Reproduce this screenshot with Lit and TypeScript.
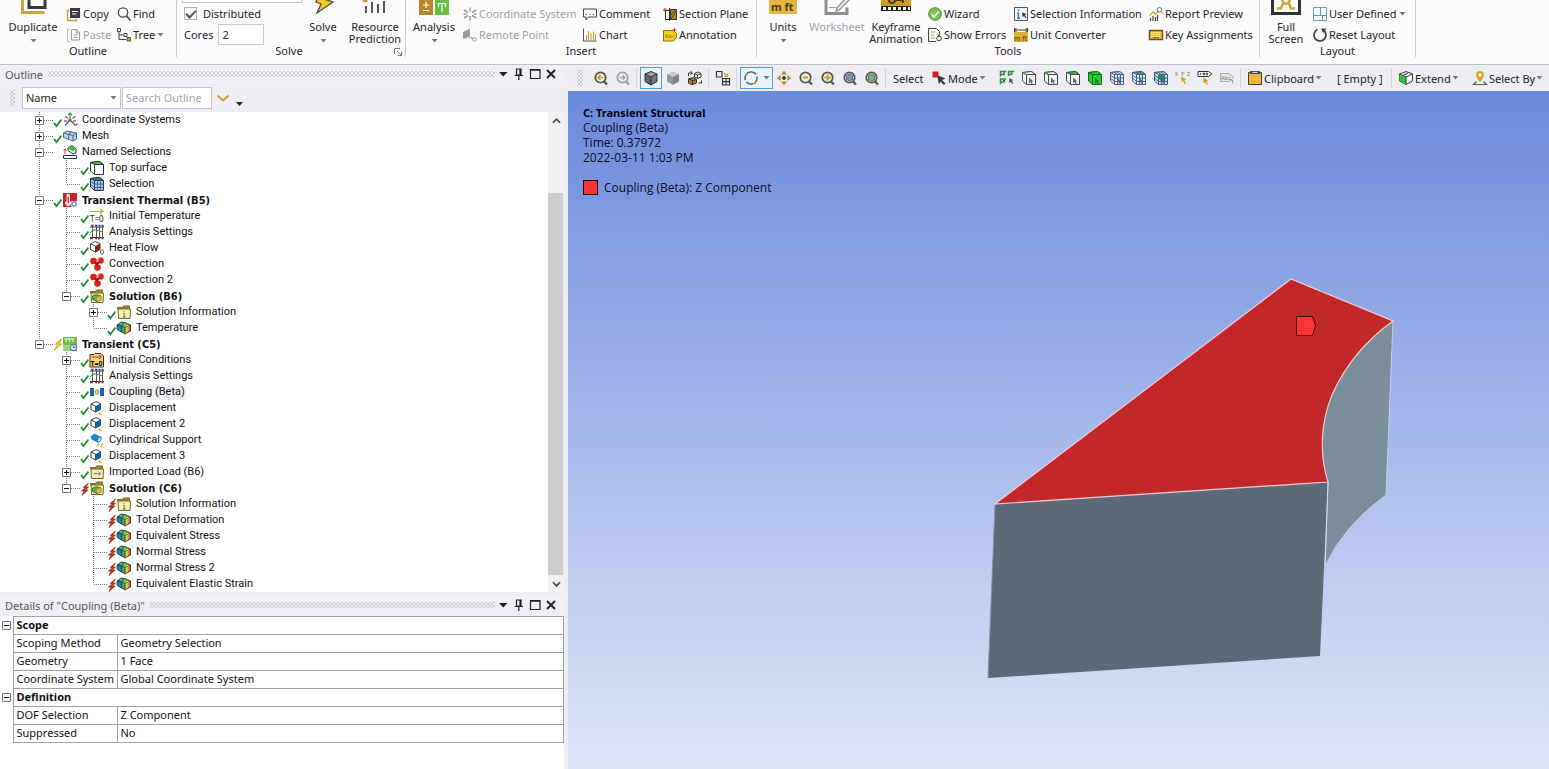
import { LitElement, html, svg, css, nothing, type TemplateResult } from "lit";
import { customElement, property, state } from "lit/decorators.js";
import { classMap } from "lit/directives/class-map.js";

type Art = TemplateResult;

/* ---------- shared icon fragments ---------- */

const lens = (rim: string, inner: Art) => svg`
  <path d="M11 11.500 14 14.500" stroke=${rim} stroke-width="2.400"/>
  <circle cx="7.500" cy="7.500" r="5.200" fill="#f4f2ee" stroke=${rim} stroke-width="1.800"/>${inner}`;

const cursor = svg`<path d="M8 7.500v6l1.500-1.400 1.200 2.200 1-.6-1.100-2.100h2z" fill="#666"/>`;

const box = (top: string, rest: string, line: string, extra: Art) => svg`
  <path d="M1.500 2.500 10.500 1.500l4 3v10H5.500l-4-3.500z" fill=${rest} stroke=${line}/>
  <path d="M1.500 2.500 10.500 1.500l4 3h-9z" fill=${top} stroke=${line}/>
  <path d="M5.500 4.500v10" stroke=${line}/>${extra}`;

const meshLines = svg`<path d="M8.500 4.500v10M11.500 4.500v10M5.500 8h9M5.500 11.500h9M2 5.500l3.500 2.500M2 8.500l3.500 3M5 2.200l3.500 2.300M8 2l3.500 2.500" stroke="#39679a"/>`;

const solid = (top: string, left: string, right: string, line: string) => svg`
  <path d="M8 1.500 14 4 8 7 2 4z" fill=${top}/><path d="M2 4l6 3v8l-6-3.500z" fill=${left}/><path d="M14 4 8 7v8l6-3.500z" fill=${right}/>
  <path d="M8 1.500 14 4v7.500L8 15l-6-3.500V4zM2 4l6 3 6-3M8 7v8" stroke=${line}/>`;

const folder = (inner: Art) => svg`
  <path d="M1.500 5V3.500h5l1-1.500h6v3" fill="#a08432" stroke="#7a6420"/>
  <path d="M2 5h12.500l-.5 9.500H2.500z" fill="#f6efb4" stroke="#7a6420"/>${inner}`;

const dispCube = svg`<path d="M2 4l5-2.500L11.500 3.500v6L6.500 12 2 9.500z" fill="#fff" stroke="#345"/>
  <path d="M6.500 6 11.500 3.500v6L6.500 12z" fill="#1763a8"/><path d="M2 4l4.500 2M6.500 6v6" stroke="#345"/>
  <path d="M14.500 10.500 10 14.500M10 12v2.500h3" stroke="#cfae5c"/>`;

const resultCube = svg`
  <path d="M1 5l4-3 4 1-1 7-3 2-4-3z" fill="#1f86b8"/><path d="M3 3.500 8 2l6 2-6 3z" fill="#6dc04a"/>
  <path d="M5.500 6 9 7.500v6.500L5.500 12z" fill="#3fae56"/><path d="M9 7.500 14.500 5v6L9 14z" fill="#f0c62e"/>
  <path d="M12.500 6 14.500 5v6l-2 1z" fill="#e0552b"/>
  <path d="M1 5l4-3 3 .3L14.500 5v6L9 14l-3.500-2L1 9.500zM5.500 6 9 7.500 14.500 5M9 7.500V14M5.500 6V12M5.500 6 8 2.500M1 5l4.500 1" stroke="#234" stroke-width=".8"/>`;

const settings = svg`<path d="M1 3h14M1 13.500h14" stroke="#333"/><path d="M3.500 2v12M7.500 2v12M10.500 2v12M13.500 2v12" stroke="#555"/>
  <path d="M1 9q3-4 6-3t7 2" stroke="#35a04a" stroke-width="1.200"/><path d="M2 1.500h2.500M6 1.500h2.500M9.500 1.500h2M12.500 1.500h2" stroke="#2a3aa0" stroke-width="1.500"/>
  <path d="M1 14.500h3M6 14.500h2M9 14.500h2M12.500 14.500h2" stroke="#a02a2a" stroke-width="1.500"/>`;

const fan = svg`<circle cx="4.500" cy="5" r="3.300" fill="#e01f1f"/><circle cx="11.500" cy="4.500" r="3.300" fill="#e01f1f"/><circle cx="8.500" cy="11.500" r="3.300" fill="#e01f1f"/>
  <circle cx="8" cy="7.500" r="2" fill="#a80f0f"/><path d="M5 8.500 3 11.500M10.500 1.500 8 6M12.500 8.500 9.500 8.500" stroke="#fff" stroke-width=".9"/>`;

const ICONS: Record<string, Art> = {
  /* ribbon, small */
  copy: svg`<path d="M3.500 4.500H1.500v10h9v-2" stroke="#c2a13c" stroke-width="1.300"/><path d="M4 2h10v10H4z" fill="#3a3a3e"/><path d="M6 5.500h6M6 8h4.500" stroke="#fff" stroke-width="1.200"/>`,
  paste: svg`<path d="M3.500 2.500H1.500v12h3" stroke="#bbb"/><path d="M5.500 2.500h5l3 3v7.500h-8zM10 2.500v3.500h3.500M7.500 8h4M7.500 10.500h4" stroke="#9a9a9e"/>`,
  find: svg`<circle cx="7" cy="6.500" r="4.700" stroke="#4a4a4e" stroke-width="1.300"/><path d="M10.500 10 14.500 14.500" stroke="#4a4a4e" stroke-width="1.800"/>`,
  tree: svg`<path d="M1.500 1.500h3v3h-3zM8 6.500h3v3H8z" stroke="#444"/><path d="M3 5v7.500h7M3 8h5" stroke="#444"/><path d="M11 10.500h3.500v3.500H11z" fill="#c2a13c" stroke="#6b5716"/>`,
  coords: svg`<path d="M8 1.500v4M8 10v4.500M2 4l4 2.500M14 4l-4 2.500M2 12l4-2.500M14 12l-4-2.500M1.500 8h3M12 8h2.500" stroke="#9c9c9c" stroke-width="1.500"/>`,
  remote: svg`<path d="M1 5 8 1.500v7L4.500 11.500H1z" fill="#9c9c9c"/><path d="M6 9l5 3" stroke="#9c9c9c" stroke-width="1.300"/><circle cx="12.500" cy="12.500" r="1.800" stroke="#9c9c9c"/>`,
  comment: svg`<path d="M1.500 3h13v8H6.500l-2.500 3v-3H1.500z" stroke="#444"/><path d="M4 8.500h1M7.500 8.500h1M11 8.500h1" stroke="#444"/>`,
  chart: svg`<path d="M1.500 1.500v12.500h13" stroke="#555"/><path d="M4.500 8v5M6.500 4v9M9 6v7M11.500 4.500V13M13.500 7v6" stroke="#c79b1e"/>`,
  section: svg`<path d="M3.500 4.500h11v9h-11z" stroke="#333"/><path d="M8.500 3.500h6v10h-6z" fill="#b0851f" stroke="#333"/><path d="M9 13 14 5.500M9 9l4-5" stroke="#5b430c"/><path d="M7.500 2v13" stroke="#333"/><path d="M1 4h4.500M3 2v4" stroke="#d22"/>`,
  annotation: svg`<path d="M1.500 3.500h10l3 3v4l-3 3.500h-10z" fill="#f3d21c" stroke="#8a6f10"/><text x="2.500" y="11" font-size="6" font-family="Noto Sans" fill="#8a6f10">Abc</text><path d="M10.500 3h4M12.500 1v4" stroke="#d22"/>`,
  wizard: svg`<circle cx="8" cy="8" r="6.300" fill="#7cc653" stroke="#4c8a2f"/><path d="M4.500 8l2.500 2.700 4.500-5" stroke="#fff" stroke-width="1.700"/>`,
  errors: svg`<path d="M9 14.500H1.500v-13h8l3 3v2" stroke="#444"/><path d="M4 5h4M4 8h3M4 11h4" stroke="#c79b1e"/><path d="M10.500 7.500l3 2M13.500 7l-3 2.500" stroke="#444"/><circle cx="12" cy="11.500" r="2.300" stroke="#444"/>`,
  selinfo: svg`<path d="M1.500 1.500h13v13h-13z" fill="#f4f8fb" stroke="#555"/><path d="M5.500 3.500v1.500M5.500 6.500v6M4 7h1.500M4 12.200h3" stroke="#2d7fb5" stroke-width="1.600"/><path d="M9 6.500l4.500 1.500-1.700 1 1.700 2.200-1 .8-1.500-2-1.300 1.300z" fill="#333"/>`,
  converter: svg`<rect x="1" y="5" width="14" height="10" fill="#dcae35"/><path d="M1.500 3h13M3.500 1 1.500 3l2 2M12.500 1l2 2-2 2M1.500 1v4M14.500 1v4" stroke="#4a3a12"/><text x="1" y="13.500" font-size="7" font-family="Noto Sans" fill="#4a3a12">m ft</text>`,
  report: svg`<path d="M2.500 15v-3M5 15v-5M7.500 15v-4M9.500 15V9" stroke="#444" stroke-width="1.200"/><path d="M1.500 9.500 5 6l2.500 2L11 5" stroke="#c79b1e" stroke-width="1.200"/><circle cx="11.500" cy="3.800" r="2.300" stroke="#777"/><path d="M13 5.500l1.800 2" stroke="#777"/>`,
  keys: svg`<path d="M1.500 3.500h13v9h-13z" fill="#efc02f" stroke="#6b5110" stroke-width="1.400"/><path d="M3 5.500h10M3 7.500h10M3 9.500h10" stroke="#fff0b0" stroke-dasharray="1.500 1"/><path d="M5 10.800h6" stroke="#6b5110"/>`,
  layout: svg`<path d="M1.500 1.500h13v13h-13zM8.500 1.500v8M1.500 9.500h13M10.500 9.500v5" stroke="#5b9aba"/>`,
  reset: svg`<path d="M5.500 2.500a6 6 0 1 0 6.500 1" stroke="#444" stroke-width="1.800"/><path d="M9 1.500h5.500L11 6z" fill="#444"/>`,

  /* toolbar */
  back: lens("#5a5550", svg`<path d="M10.500 7.500H5M7.500 5 5 7.500 7.500 10" stroke="#c79b1e" stroke-width="1.500"/>`),
  forward: lens("#a0a0a4", svg`<path d="M4.500 7.500H10M7.500 5l2.500 2.500L7.500 10" stroke="#a0a0a4" stroke-width="1.300"/>`),
  shaded: solid("#9aa0a0", "#5f6464", "#74797a", "#2e3030"),
  plain: solid("#c4c6c8", "#96999c", "#7e8184", "transparent"),
  swap: svg`<path d="M1.500 9 6 7.500l3.500 2V13L5 14.800 1.500 13z" fill="#a88320" stroke="#333"/><path d="M1.500 9 5.500 10.500l4-1M5.500 10.500v4" stroke="#333"/><path d="M7.500 3.500 11 2l3 1.500V7l-3 1.500-3.500-1.500zM7.500 3.500 10.500 5l3.500-1.500M10.500 5v3" stroke="#333"/><path d="M1.500 6V3h3.500M3.500 1 5.500 3 3.500 5M14.500 10.500v2.500H11.500" stroke="#333"/>`,
  views: svg`<path d="M1.500 1.500h5.500V7H1.500zM7.500 8.500h7v6.500h-7zM11 8.500V15M7.500 11.700h7" stroke="#333" stroke-width="1.200"/><path d="M9 3l3 3M12.500 3.500V6.500H9.500" stroke="#c79b1e" stroke-width="1.200"/>`,
  rotate: svg`<path d="M3.500 4A6 6 0 0 1 13 4.500M13.800 6.500A6 6 0 0 1 12 12.500M10.500 13.500A6 6 0 0 1 3.500 12M2.300 10A6 6 0 0 1 3 5" stroke="#555" stroke-width="1.400"/><path d="M3 4h2M11 13h2" stroke="#c79b1e" stroke-width="2"/>`,
  pan: svg`<path d="M8 .800 11 4.500H5zM8 15.200 5 11.500h6zM.800 8 4.500 5v6zM15.200 8 11.500 5v6z" fill="#b58a1c"/><path d="M7 6h2v1h1v2H9v1H7V9H6V7h1z" fill="#444"/>`,
  zoomout: lens("#5a5550", svg`<path d="M5 7.500h5" stroke="#c79b1e" stroke-width="2"/>`),
  zoomin: lens("#5a5550", svg`<path d="M4.500 7.500h6M7.500 4.500v6" stroke="#c79b1e" stroke-width="2"/>`),
  fit: lens("#5a5550", svg`<path d="M7.500 4l3 1.500v4l-3 1.500-3-1.500v-4z" fill="#7f97b5" stroke="#3f5878" stroke-width=".8"/>`),
  fitsel: lens("#5a5550", svg`<path d="M7.500 4l3 1.500v4l-3 1.500-3-1.500v-4z" fill="#7cab86" stroke="#2f6b3d" stroke-width=".8"/>`),
  mode: svg`<path d="M1.500 1.500h6v6h-6z" fill="#cf2020"/><path d="M6 5l8.500 3.500L11 10l3.500 3.500-1.500 1.500L9.500 11.500 8 14.500z" fill="#3c3c3c"/>`,
  filter: svg`<path d="M1.500 6.500V1.500H7M9.500 6V1.500H15M1.500 14.500V9H7M1.500 4.500H6M9.500 4.500h4M1.500 12H6" stroke="#2d8d3c" stroke-width="1.500"/><path d="M4 3h2M11.500 3h2M4 10.500h2" stroke="#333"/><path d="M10 8l4.500 2-1.700 1 1.700 2.300-1 .7-1.700-2-1.300 1.300z" fill="#555"/>`,
  vertex: box("#f2f2f4", "#f2f2f4", "#4a4a4e", svg`${cursor}<path d="M1 2h3v3z" fill="#2aa63a"/>`),
  edge: box("#f2f2f4", "#f2f2f4", "#4a4a4e", svg`${cursor}<path d="M1.500 2.500 5.500 4.500" stroke="#2aa63a" stroke-width="1.800"/>`),
  face: box("#2bc53a", "#f2f2f4", "#4a4a4e", cursor),
  body: box("#22d832", "#1fcf2f", "#17662a", svg`<path d="M8 7.500v6l1.500-1.400 1.200 2.200 1-.6-1.100-2.100h2z" fill="#117a1c"/>`),
  node: box("#e7eef6", "#e7eef6", "#44607e", svg`${meshLines}${cursor}`),
  eface: box("#4cb05c", "#e7eef6", "#44607e", svg`${meshLines}${cursor}`),
  element: box("#c9d8e8", "#c9d8e8", "#44607e", svg`<path d="M5 4h7v7H8L5 8z" fill="#2b9a44"/>${meshLines}${cursor}`),
  xyz: svg`<text x="0" y="5.500" font-size="5" font-family="Noto Sans" fill="#666">X</text><text x="6" y="5.500" font-size="5" font-family="Noto Sans" fill="#666">Y</text><text x="12" y="5.500" font-size="5" font-family="Noto Sans" fill="#666">Z</text><path d="M6 6.500l5.500 3-2 .7 1.500 3.500-1.300.6-1.500-3.300-1.500 1.300z" fill="#cfa12a"/>`,
  probe: svg`<path d="M1 1.500h10.500L15 4l-3.500 2.500H1z" fill="#fff" stroke="#333"/><path d="M3.500 3v2M6 3h1.500v2H6zM9 3h1.500v2H9z" stroke="#333" stroke-width=".8"/><path d="M6 7.500l5.500 3-2 .7 1.500 3-1.300.6-1.500-2.800-1.500 1.300z" fill="#cfa12a"/>`,
  label: svg`<path d="M1.500 3.500h9l4 4-4 4h-9z" fill="#e4e4e6" stroke="#aaa"/><text x="2" y="10" font-size="5.500" font-family="Noto Sans" fill="#777">Abc</text><path d="M10 9l4.500 2-1.500 1 1.500 2" stroke="#999"/>`,
  clipboard: svg`<path d="M1.500 2.500h13v12h-13z" fill="#e8b63c" stroke="#4a3c18"/><path d="M3 1h10v3H3z" fill="#4a4a4a"/><path d="M5.500 2.500h5" stroke="#ccc"/>`,
  extend: svg`<path d="M8 1.500 14.500 4v7L8 14.500 1.500 11V4z" fill="#f8f8f8" stroke="#3a3a3a"/><path d="M1.500 5 8 7.500v7L1.500 11z" fill="#24c434"/><path d="M1.500 4 8 7l6.500-3M8 7v7.500M4.500 5.500 11 2.500" stroke="#3a3a3a"/>`,
  selectby: svg`<path d="M8 1a4 4 0 0 1 4 4c0 3-4 7-4 7S4 8 4 5a4 4 0 0 1 4-4z" fill="#dca531"/><circle cx="8" cy="5" r="1.500" fill="#fff"/><path d="M4.500 11.500 1.500 14.500h13l-3-3" stroke="#555" stroke-width="1.200"/>`,

  /* tree */
  tCoords: svg`<path d="M8 8V1.500M6 3l2-2 2 2" stroke="#27a13a" stroke-width="1.200"/><path d="M8 8l5.500 5M8 8 3 13.500" stroke="#2f63b5" stroke-width="1.300"/><path d="M3 4l3 2.500M13.500 4 10.500 6.500M2 9h3M11 9h3" stroke="#777" stroke-width="1.300"/><circle cx="8" cy="8" r="1.600" fill="#d03030"/><path d="M12 13h3v-2" stroke="#d03030"/>`,
  tMesh: svg`<path d="M1.500 5 5 3l9.500 2v6L11 13 1.500 9.500z" fill="#bcd0e6" stroke="#4a6684"/><path d="M1.500 5 11 7.500 14.500 5M11 7.500V13M9 4 6.500 6.500v5" stroke="#4a6684"/>`,
  tNamed: svg`<path d="M6 4l4-2.500L14 5v4l-3 1-5-3.500z" fill="#e9f5ea" stroke="#333"/><path d="M6 4l4-2.500L14 5l-3.500 2.500z" fill="#3cba4b"/><path d="M3 10V5M1.500 6.500 3 5l1.500 1.500" stroke="#c33"/><path d="M1.500 11.500h13v3h-13z" fill="#fff" stroke="#333"/>`,
  tFace: box("#4cc05a", "#fff", "#333", svg``),
  tSel: box("#3c9b4b", "#b7c9e4", "#26344a", meshLines),
  tThermal: svg`<rect x="1" y="1" width="14" height="14" fill="#c9202a"/><path d="M5 2.500h2.500V9a2.500 2.500 0 1 1-2.500 0z" fill="#f6d8d8" stroke="#fff" stroke-width=".8"/><path d="M6.200 5v6" stroke="#c9202a" stroke-width="1.200"/><rect x="9" y="9" width="6" height="6" fill="#b6c3e6"/><circle cx="12" cy="12" r="2" fill="#fff" stroke="#5f79b8"/>`,
  tInit: svg`<path d="M1 3.500h12M11 1l3 2.500L11 6" stroke="#c9a13a" stroke-width="1.200"/><text x="1" y="14" font-size="8" font-family="Noto Sans" fill="#222">T=0</text>`,
  tSettings: settings,
  tHeat: svg`<path d="M1.500 4 6 1.500 11 3.500v6L6.500 12 1.500 9.500z" fill="#fff" stroke="#444"/><path d="M6.500 6 11 3.500v6L6.500 12z" fill="#8e1c1c"/><path d="M1.500 4l5 2v6" stroke="#444"/><ellipse cx="13" cy="12" rx="1.500" ry="2.300" stroke="#666"/>`,
  tFan: fan,
  tSolution: folder(svg`<path d="M3.500 8l4-1.500L12 8v4l-4 1.500-4.500-2z" fill="#5db04a" stroke="#2c5a34" stroke-width=".8"/><path d="M8 9.500 12 8v4l-4 1.500z" fill="#e8b92d"/>`),
  tInfo: folder(svg`<path d="M8 7v1.300M7 9.500h1.200V13M6.800 13h3" stroke="#4c8a4c"/>`),
  tResult: resultCube,
  tTransient: svg`<rect x="1" y="1" width="14" height="14" fill="#74bf4b"/><path d="M2.500 3h10M4 3v3M7.500 3v3M11 3v3" stroke="#e9f7df"/><rect x="1" y="9" width="8" height="6" fill="#9bd27b"/><circle cx="11.500" cy="11.500" r="3.300" fill="#cfe0f3" stroke="#3d72ad"/><path d="M11.500 9.500v2h2" stroke="#3d72ad"/>`,
  tInitFold: svg`<path d="M1 4V2.500h4L6 1.500h6L14.500 4v11H1z" fill="#f4d57e" stroke="#3c2e10"/><path d="M3 5h9M10 3l2.500 2L10 7" stroke="#c4302a"/><text x="1.500" y="14" font-size="7" font-weight="700" font-family="Noto Sans" fill="#111">T=0</text>`,
  tCoupling: svg`<path d="M1 4h4v8H1zM11 4h4v8h-4z" fill="#1c669e"/><path d="M6 5h4v6H6z" fill="#d9eadf"/><circle cx="8" cy="8" r="2" fill="#e4d48d" stroke="#8c9a60" stroke-width=".8"/>`,
  tDisp: dispCube,
  tCyl: svg`<path d="M1.500 4.500 5.500 1.500 12 5l-3.500 5.500-6-3z" fill="#2487d6"/><ellipse cx="10.300" cy="7.500" rx="1.500" ry="3" transform="rotate(30 10.300 7.500)" fill="#dcecf8" stroke="#1a5f99" stroke-width=".8"/><path d="M10 11.500l-2.500 3M14 11.500l-2.500 3" stroke="#cfae5c" stroke-width="1.300"/>`,
  tImport: folder(svg`<path d="M4.500 9.700h7M9.500 8l2 1.700-2 1.700" stroke="#4a7ba6"/>`),

  /* title bar */
  menu: svg`<path d="M4 6h8.500L8.200 10.500z" fill="#1e1e1e"/>`,
  pin: svg`<path d="M5.500 3h4.500v6H5.500zM9 3v6M3.500 9.500h8.500M7.800 10v4" stroke="#1e1e1e" stroke-width="1.200"/>`,
  max: svg`<path d="M3.500 3.500h9.500v9H3.500z" stroke="#1e1e1e" stroke-width="1.200"/><path d="M3.500 4h9.500" stroke="#1e1e1e" stroke-width="1.500"/>`,
  close: svg`<path d="M4 4l8 8M12 4l-8 8" stroke="#1e1e1e" stroke-width="1.800"/>`,
  chevGold: svg`<path d="M2.500 5.500 8 10.500l5.500-5" stroke="#c9a13a" stroke-width="1.800"/>`,
};

const BIG: Record<string, Art> = {
  duplicate: svg`<path d="M12 0v24.500h16V0" fill="none" stroke="#3a3a3e" stroke-width="3"/><path d="M5.500 14v15.500h22" stroke="#c9a43a" stroke-width="3"/>`,
  solve: svg`<path d="M16 4 28 12 20 17l6 2L10 30l4-9-5-2z" fill="#f3c920" stroke="#4a4a4a" stroke-width="1.300"/>`,
  resource: svg`<circle cx="6" cy="17" r="2.500" fill="#c9a43a"/><path d="M7 23v7M13 19v11M19 21v9M25 18v12" stroke="#55555a" stroke-width="2"/>`,
  analysis: svg`<rect x="1" y="17" width="14" height="15" fill="#b5872a"/><rect x="17" y="17" width="14" height="15" fill="#67c043"/><path d="M8 19v6M5 22h6M5 27.500h6M20 20.500h8M24 20v9M20.500 20v4M27.500 20v4" stroke="#fff" stroke-width="1.200"/>`,
  units: svg`<rect x="2" y="4" width="28" height="27" fill="#e3b741"/><text x="4" y="28" font-size="11" font-weight="700" font-family="Noto Sans" fill="#4a3a12">m ft</text>`,
  worksheet: svg`<path d="M5 10v20.500h21v-6" fill="none" stroke="#8e8e92" stroke-width="3"/><path d="M29 16 18 27l-3 1 1-3 10-11" stroke="#9a9a9e" stroke-width="1.500"/><path d="M8 24.500h7" stroke="#9a9a9e"/>`,
  keyframe: svg`<rect x="1" y="4" width="30" height="20" fill="#cf9c23"/><circle cx="12" cy="17" r="3" stroke="#4a3a12" stroke-width="2"/><path d="M15 17h8v3" stroke="#4a3a12" stroke-width="2"/><rect x="1" y="23" width="30" height="5" fill="#222"/><path d="M3 25.500h27" stroke="#fff" stroke-width="3" stroke-dasharray="3 2"/>`,
  fullscreen: svg`<path d="M2.500 6v24.500h27V6" stroke="#333" stroke-width="3"/><path d="M7 25.500h4l2-5h6l2 5h4M11 15l2.500 5M21 15l-2.500 5" stroke="#c9a43a" stroke-width="2.500"/>`,
};

const icon = (name: string) => html`<svg class="ic" viewBox="0 0 16 16" width="16" height="16" fill="none" aria-hidden="true">${ICONS[name]}</svg>`;
const bigIcon = (name: string) => html`<svg class="ic" viewBox="0 0 32 32" width="32" height="32" fill="none" aria-hidden="true">${BIG[name]}</svg>`;
const caret = html`<svg class="caret" viewBox="0 0 7 4" width="7" height="4" aria-hidden="true"><path d="M.500 0h6L3.500 3.500z" fill="#77777b"/></svg>`;

const base = css`
  * { box-sizing: border-box; }
  button, input, select { font: inherit; color: inherit; margin: 0; padding: 0; border-radius: 0; }
  button { background: none; border: 0; display: flex; align-items: center; white-space: nowrap; }
  .ic, .caret { display: block; flex: none; }
  .dots {
    background-image: radial-gradient(circle, #a9a9b1 0 1px, transparent 1px), radial-gradient(circle, #a9a9b1 0 1px, transparent 1px);
    background-size: 4px 4px;
    background-position: 0 0, 2px 2px;
    opacity: 0.5;
  }
`;

/* ---------- ribbon ---------- */

@customElement("ribbon-bar")
class RibbonBar extends LitElement {
  @state() private distributed = true;

  static styles = [base, css`
    :host { display: flex; align-items: flex-end; height: 65px; padding-bottom: 7px; overflow: hidden;
      background: #fafafb; border-bottom: 1px solid #bdbdc6; color: #262626; line-height: 12px; }
    .group { border-right: 1px solid #c9c9cf; flex: none; }
    .solving { padding-right: 4px; }
    .body { display: flex; align-items: flex-end; height: 63px; }
    .name { display: flex; justify-content: center; position: relative; }
    .launch { position: absolute; right: -1px; top: 3px; }
    .big { flex-direction: column; height: 62px; flex: none; text-align: center; }
    .big .ic { margin-bottom: 6px; }
    .big .text { display: block; white-space: pre-line; }
    .big .caret { margin-top: 6px; }
    .col { display: flex; flex-direction: column; flex: none; }
    .row { display: flex; align-items: center; height: 21px; gap: 1px; }
    .row .caret { margin-left: 1px; }
    .off { color: #a2a2a6; }
    .xs { width: 52px; } .s { width: 56px; } .m { width: 62px; } .l { width: 66px; }
    .c0 { width: 50px; } .c1 { width: 60px; } .c2 { width: 80px; } .c3 { width: 86px; } .c4 { width: 94px; }
    .c5 { width: 103px; } .c6 { width: 111px; } .c7 { width: 120px; } .c8 { width: 135px; }
    .solver { width: 120px; height: 21px; border: 1px solid #c4c4ca; background: #fff; }
    .opts { padding: 0 0 0 5px; }
    .opts .row { padding-left: 2px; gap: 5px; }
    .cores { width: 46px; height: 21px; border: 1px solid #c9c9d2; background: #fff; padding-left: 3px; outline: 0; }
    .tick { appearance: none; width: 13px; height: 13px; border: 1px solid #b4b4ba; background: #fff; display: grid; place-items: center; margin-right: 1px; }
    .tick:checked::before { content: ""; width: 4px; height: 8px; margin-bottom: 2px; border: solid #555; border-width: 0 2px 2px 0; transform: rotate(45deg); }
  `];

  private big(ic: string, text: string, width: string, menu = false, off = false) {
    return html`<button class="big ${width} ${off ? "off" : ""}" ?disabled=${off}>${bigIcon(ic)}<span class="text">${text}</span>${menu ? caret : nothing}</button>`;
  }

  private col(width: string, rows: [string, string, string?][]) {
    return html`<div class="col ${width}">${rows.map(([ic, text, flag]) => html`
      <button class="row ${flag === "off" ? "off" : ""}" ?disabled=${flag === "off"}>${icon(ic)}<span>${text}</span>${flag === "menu" ? caret : nothing}</button>`)}</div>`;
  }

  render() {
    return html`
      <div class="group"><div class="body">
        ${this.big("duplicate", "Duplicate", "l", true)}
        ${this.col("c0", [["copy", "Copy"], ["paste", "Paste", "off"]])}
        ${this.col("c1", [["find", "Find"], ["tree", "Tree", "menu"]])}
      </div><div class="name">Outline</div></div>

      <div class="group solving"><div class="body">
        <div class="col c7 opts">
          <input class="solver" aria-label="Solver configuration">
          <label class="row"><input class="tick" type="checkbox" .checked=${this.distributed}
            @change=${(e: Event) => (this.distributed = (e.target as HTMLInputElement).checked)}>Distributed</label>
          <label class="row">Cores<input class="cores" value="2"></label>
        </div>
        ${this.big("solve", "Solve", "xs", true)}
        ${this.big("resource", "Resource\nPrediction", "xs")}
      </div><div class="name">Solve
        <svg class="launch" viewBox="0 0 8 8" width="8" height="8" fill="none" aria-hidden="true"><path d="M.500 6V.500H6M3 3l4 4M7.500 3.500v4h-4" stroke="#777"/></svg>
      </div></div>

      <div class="group"><div class="body">
        ${this.big("analysis", "Analysis", "s", true)}
        ${this.col("c7", [["coords", "Coordinate System", "off"], ["remote", "Remote Point", "off"]])}
        ${this.col("c2", [["comment", "Comment"], ["chart", "Chart"]])}
        ${this.col("c4", [["section", "Section Plane"], ["annotation", "Annotation"]])}
      </div><div class="name">Insert</div></div>

      <div class="group"><div class="body">
        ${this.big("units", "Units", "xs", true)}
        ${this.big("worksheet", "Worksheet", "s", false, true)}
        ${this.big("keyframe", "Keyframe\nAnimation", "m")}
        ${this.col("c3", [["wizard", "Wizard"], ["errors", "Show Errors"]])}
        ${this.col("c8", [["selinfo", "Selection Information"], ["converter", "Unit Converter"]])}
        ${this.col("c6", [["report", "Report Preview"], ["keys", "Key Assignments"]])}
      </div><div class="name">Tools</div></div>

      <div class="group"><div class="body">
        ${this.big("fullscreen", "Full\nScreen", "xs")}
        ${this.col("c5", [["layout", "User Defined", "menu"], ["reset", "Reset Layout"]])}
      </div><div class="name">Layout</div></div>`;
  }
}

/* ---------- panel title ---------- */

@customElement("panel-title")
class PanelTitle extends LitElement {
  @property() heading = "";

  static styles = [base, css`
    :host { display: flex; align-items: center; padding: 0 5px; color: #55555a; background: #efeff4; flex: none; }
    .dots { flex: 1; height: 6px; margin: 0 0 0 5px; }
    .tool { width: 16px; height: 18px; justify-content: center; }
  `];

  render() {
    return html`<span>${this.heading}</span><span class="dots"></span>
      ${[["menu", "Window options"], ["pin", "Auto hide"], ["max", "Maximize"], ["close", "Close"]].map(
        ([ic, label]) => html`<button class="tool" aria-label=${label}>${icon(ic)}</button>`)}`;
  }
}

/* ---------- outline tree ---------- */

interface Node {
  text: string;
  icon: string;
  level: number;
  mark?: "ok" | "bolt" | "flash";
  open?: boolean;
  bold?: boolean;
  selected?: boolean;
}

const n = (level: number, text: string, ic: string, mark?: Node["mark"], more: Partial<Node> = {}): Node => ({ level, text, icon: ic, mark, ...more });

const NODES: Node[] = [
  n(0, "Coordinate Systems", "tCoords", "ok", { open: false }),
  n(0, "Mesh", "tMesh", "ok", { open: false }),
  n(0, "Named Selections", "tNamed", undefined, { open: true }),
  n(1, "Top surface", "tFace", "ok"),
  n(1, "Selection", "tSel", "ok"),
  n(0, "Transient Thermal (B5)", "tThermal", "ok", { open: true, bold: true }),
  n(1, "Initial Temperature", "tInit", "ok"),
  n(1, "Analysis Settings", "tSettings", "ok"),
  n(1, "Heat Flow", "tHeat", "ok"),
  n(1, "Convection", "tFan", "ok"),
  n(1, "Convection 2", "tFan", "ok"),
  n(1, "Solution (B6)", "tSolution", "ok", { open: true, bold: true }),
  n(2, "Solution Information", "tInfo", "ok", { open: false }),
  n(2, "Temperature", "tResult", "ok"),
  n(0, "Transient (C5)", "tTransient", "flash", { open: true, bold: true }),
  n(1, "Initial Conditions", "tInitFold", "ok", { open: false }),
  n(1, "Analysis Settings", "tSettings", "ok"),
  n(1, "Coupling (Beta)", "tCoupling", "ok", { selected: true }),
  n(1, "Displacement", "tDisp", "ok"),
  n(1, "Displacement 2", "tDisp", "ok"),
  n(1, "Cylindrical Support", "tCyl", "ok"),
  n(1, "Displacement 3", "tDisp", "ok"),
  n(1, "Imported Load (B6)", "tImport", "ok", { open: false }),
  n(1, "Solution (C6)", "tSolution", "bolt", { open: true, bold: true }),
  n(2, "Solution Information", "tInfo", "bolt"),
  n(2, "Total Deformation", "tResult", "bolt"),
  n(2, "Equivalent Stress", "tResult", "bolt"),
  n(2, "Normal Stress", "tResult", "bolt"),
  n(2, "Normal Stress 2", "tResult", "bolt"),
  n(2, "Equivalent Elastic Strain", "tResult", "bolt"),
];

/* True when a later row continues the branch line of the given level. */
const continues = (index: number, level: number) => {
  for (let i = index + 1; i < NODES.length; i++) {
    if (NODES[i].level === level) return true;
    if (NODES[i].level < level) return false;
  }
  return false;
};

const MARKS = {
  ok: svg`<path d="M1 11l2.500 3L8.500 7.500" stroke="#1f8a2c" stroke-width="1.800"/>`,
  bolt: svg`<path d="M8.500 3 3 7.500h2.500L1.500 11H4l-2 4.500 6-5.500H5.500L8.500 7H6z" fill="#c5321c" stroke="#8f2412" stroke-width=".6"/>`,
  flash: svg`<path d="M8.500 2.500 2.500 8H5L1 14.500 8.500 8H6z" fill="#f2e23a" stroke="#b09a1c" stroke-width=".8"/>`,
};

@customElement("outline-tree")
class OutlineTree extends LitElement {
  static styles = [base, css`
    :host { display: flex; background: #fff; color: #111; flex: none; font-family: Roboto, "Open Sans", sans-serif; }
    ul { list-style: none; margin: 0; padding: 0 0 0 26px; flex: 1; min-width: 0; }
    li { display: flex; align-items: center; height: 16px; line-height: 16px; white-space: nowrap; }
    .guide { position: relative; width: 27px; height: 16px; flex: none; }
    .guide svg { display: block; }
    .toggle { position: absolute; left: 9px; top: 4px; }
    .text { margin-left: 3px; padding: 0 1px; }
    .bold { font-weight: 700; font-family: "DejaVu Sans Condensed", "DejaVu Sans", sans-serif; line-height: 17px; }
    .selected { background: #f0f0f0; }
    .bar { width: 16px; background: #f0f0f0; display: flex; flex-direction: column; flex: none; }
    .bar button { height: 17px; justify-content: center; }
    .gap { flex: 64; }
    .thumb { flex: 382; background: #cdcdcd; margin-right: 1px; }
  `];

  private guide(index: number, level: number) {
    const node = NODES[index];
    const own = node.level === level;
    const down = continues(index, level);
    const toggle = own && node.open !== undefined;
    return html`<span class="guide">
      <svg viewBox="0 0 27 16" width="27" height="16" fill="none" stroke="#77777b" stroke-dasharray="1 1" aria-hidden="true">
        ${own || down ? svg`<path d="M13.500 0V${down ? 16 : 8}"/>` : nothing}
        ${own ? svg`<path d="M14 8.500H28"/>` : nothing}
      </svg>
      ${toggle ? html`<button class="toggle" aria-label=${node.open ? "Collapse" : "Expand"}>
        <svg viewBox="0 0 9 9" width="9" height="9" fill="#fff" aria-hidden="true"><path d="M.5.5h8v8h-8z" stroke="#77777b"/><path d=${node.open ? "M2 4.500h5" : "M2 4.500h5M4.500 2v5"} stroke="#111"/></svg></button>` : nothing}
    </span>`;
  }

  render() {
    return html`
      <ul role="tree" aria-label="Outline">
        ${NODES.map((node, i) => html`<li role="treeitem" aria-level=${node.level + 1}>
          ${Array.from({ length: node.level + 1 }, (_, level) => this.guide(i, level))}
          <svg class="ic" viewBox="0 0 9 16" width="9" height="16" fill="none" aria-hidden="true">${node.mark ? MARKS[node.mark] : nothing}</svg>
          ${icon(node.icon)}
          <span class=${classMap({ text: true, bold: !!node.bold, selected: !!node.selected })}>${node.text}</span>
        </li>`)}
      </ul>
      <div class="bar">
        <button aria-label="Scroll up"><svg viewBox="0 0 10 6" width="9" height="6" fill="none"><path d="M1 5l4-4 4 4" stroke="#444" stroke-width="1.800"/></svg></button>
        <span class="gap"></span><span class="thumb"></span>
        <button aria-label="Scroll down"><svg viewBox="0 0 10 6" width="9" height="6" fill="none"><path d="M1 1l4 4 4-4" stroke="#444" stroke-width="1.800"/></svg></button>
      </div>`;
  }
}

/* ---------- details grid ---------- */

const DETAILS: { group: string; rows: [string, string][] }[] = [
  { group: "Scope", rows: [["Scoping Method", "Geometry Selection"], ["Geometry", "1 Face"], ["Coordinate System", "Global Coordinate System"]] },
  { group: "Definition", rows: [["DOF Selection", "Z Component"], ["Suppressed", "No"]] },
];

@customElement("details-grid")
class DetailsGrid extends LitElement {
  static styles = [base, css`
    :host { display: block; background: #fff; color: #111; flex: 1; }
    table { border-collapse: collapse; width: 100%; table-layout: fixed; line-height: 15px; }
    .gutter { width: 13px; } .key { width: 104px; }
    th, td { height: 18px; padding: 0 3px; text-align: left; vertical-align: top; font-weight: 400; white-space: nowrap; border: 1px solid #a0a0a0; }
    .side { border: 0; padding: 4px 0 0 2px; }
    .head { font-weight: 700; }
  `];

  render() {
    return html`<table aria-label="Details">
      <colgroup><col class="gutter"><col class="key"><col></colgroup>
      ${DETAILS.map((d) => html`<tbody>
        <tr><td class="side"><button aria-label="Collapse ${d.group}"><svg viewBox="0 0 9 9" width="9" height="9" fill="#fff"><path d="M.5.5h8v8h-8z" stroke="#77777b"/><path d="M2 4.500h5" stroke="#111"/></svg></button></td>
          <th class="head" colspan="2">${d.group}</th></tr>
        ${d.rows.map(([k, v]) => html`<tr><td class="side"></td><th scope="row">${k}</th><td>${v}</td></tr>`)}
      </tbody>`)}
    </table>`;
  }
}

/* ---------- graphics toolbar ---------- */

@customElement("view-toolbar")
class ViewToolbar extends LitElement {
  static styles = [base, css`
    :host { display: flex; align-items: center; height: 26px; background: #ededf2; color: #222; padding-left: 9px; overflow: hidden; }
    .dots { width: 6px; height: 16px; margin-right: 7px; flex: none; }
    .tool { width: 22px; height: 22px; justify-content: center; flex: none; }
    .on { border: 1px solid #5a9ccc; background: #e9f1f8; }
    .wide { width: 33px; gap: 4px; }
    .sep { width: 1px; height: 20px; margin: 0 3px 0 2px; background: #d3d3da; flex: none; }
    .text { flex: none; display: flex; align-items: center; gap: 1px; height: 22px; }
    .select { width: 38px; margin-left: 4px; }
    .mode { width: 65px; }
    .clip { width: 90px; margin-left: 3px; }
    .empty { width: 52px; }
    .extend { width: 74px; margin-left: 3px; }
  `];

  private tools(names: string[], on = "") {
    return names.map((name) => html`<button class=${classMap({ tool: true, on: name === on })} aria-label=${name}>${icon(name)}</button>`);
  }

  render() {
    const sep = html`<span class="sep"></span>`;
    return html`
      <span class="dots"></span>
      ${this.tools(["back", "forward"])}${sep}
      ${this.tools(["shaded", "plain", "swap"], "shaded")}${sep}
      ${this.tools(["views"])}${sep}
      <button class="tool on wide" aria-label="rotate">${icon("rotate")}${caret}</button>
      ${this.tools(["pan", "zoomout", "zoomin", "fit", "fitsel"])}${sep}
      <span class="text select">Select</span>
      <button class="text mode">${icon("mode")}Mode${caret}</button>
      ${this.tools(["filter", "vertex", "edge", "face", "body", "node", "eface", "element", "xyz", "probe", "label"])}${sep}
      <button class="text clip">${icon("clipboard")}Clipboard${caret}</button>
      <span class="text empty">[ Empty ]</span>${sep}
      <button class="text extend">${icon("extend")}Extend${caret}</button>
      <button class="text">${icon("selectby")}Select By${caret}</button>`;
  }
}

/* ---------- graphics window ---------- */

@customElement("model-view")
class ModelView extends LitElement {
  static styles = [base, css`
    :host { display: block; position: relative; flex: 1; min-height: 0; overflow: hidden; color: #0a0a20;
      background: linear-gradient(#6a8adc, #dfe6f9); }
    .scene { position: absolute; inset: 0; width: 100%; height: 100%; }
    .info { position: relative; padding: 14px 15px; font: 12px/15px "Open Sans", sans-serif; }
    .title { font-weight: 700; font-size: 11px; font-family: "Noto Sans", sans-serif; color: #000018; }
    .legend { display: flex; align-items: center; gap: 6px; margin-top: 15px; }
    .swatch { width: 15px; height: 15px; background: #ff3535; border: 1px solid #200; }
  `];

  render() {
    return html`
      <svg class="scene" viewBox="0 -1 981 678" preserveAspectRatio="xMidYMid slice" fill="none" role="img" aria-label="Coupled part">
        <path d="M825 229 818 403Q777 432 757 474L760 390 740 330 760 260z" fill="#7b8e9c"/>
        <path d="M825 229 818 403Q777 432 757 474L760 390" stroke="#c3d0e4"/>
        <path d="M427 412 420 586 752 564 760 390z" fill="#5c6a77"/>
        <path d="M760 390 757 474" stroke="#d5dde8"/>
        <path d="M427 412 420 586" stroke="#8494b0"/>
        <path d="M427 412 723 187 825 229C797 249 776 276 764 303 753 330 751 361 760 390z" fill="#c22829" stroke="#f3ccd4" stroke-width="1.200"/>
        <path d="M728.500 224.500h16l3 9-3 10h-16z" fill="#ff3535" stroke="#4a0808"/>
      </svg>
      <div class="info">
        <div class="title">C: Transient Structural</div>
        <div>Coupling (Beta)</div>
        <div>Time: 0.37972</div>
        <div>2022-03-11 1:03 PM</div>
        <div class="legend"><span class="swatch"></span>Coupling (Beta): Z Component</div>
      </div>`;
  }
}

/* ---------- application ---------- */

@customElement("app-root")
class AppRoot extends LitElement {
  static styles = [base, css`
    :host { display: flex; flex-direction: column; height: 100vh; overflow: hidden; background: #ededf2;
      font-family: "Noto Sans", "Open Sans", sans-serif; font-size: 11px; line-height: 15px; }
    .work { flex: 1; min-height: 0; display: grid; grid-template-columns: minmax(0, 564fr) minmax(0, 981fr); gap: 4px; }
    .side, .main { display: flex; flex-direction: column; min-width: 0; min-height: 0; }
    .search { display: flex; align-items: center; height: 29px; padding-left: 10px; flex: none; }
    .search .dots { width: 5px; height: 16px; margin-right: 7px; }
    .pick { position: relative; display: flex; align-items: center; width: 99px; }
    .pick .caret { position: absolute; right: 4px; pointer-events: none; }
    .pick select { appearance: none; width: 100%; height: 22px; padding: 0 3px; border: 1px solid #c4c4ce; background: #fff; color: #222; }
    .query { width: 90px; height: 22px; padding: 0 3px; margin-left: 1px; border: 1px solid #c4c4ce; background: #fff; outline: 0; }
    .query::placeholder { color: #a5a5ab; opacity: 1; }
    .next { margin-left: 3px; }
    .more { align-self: flex-end; margin: 0 0 6px 5px; }
    .details { margin-top: 4px; flex: 1; display: flex; flex-direction: column; min-height: 0; }
    .details panel-title { height: 20px; padding-bottom: 2px; }
  `];

  render() {
    return html`
      <ribbon-bar></ribbon-bar>
      <div class="work">
        <div class="side">
          <panel-title heading="Outline"></panel-title>
          <div class="search">
            <span class="dots"></span>
            <span class="pick"><select aria-label="Search by"><option>Name</option></select>${caret}</span>
            <input class="query" placeholder="Search Outline" aria-label="Search Outline">
            <button class="next" aria-label="Find next">${icon("chevGold")}</button>
            <button class="more" aria-label="More"><svg viewBox="0 0 7 4" width="7" height="4"><path d="M0 0h7L3.500 4z" fill="#222"/></svg></button>
          </div>
          <outline-tree></outline-tree>
          <section class="details">
            <panel-title heading='Details of "Coupling (Beta)"'></panel-title>
            <details-grid></details-grid>
          </section>
        </div>
        <div class="main">
          <view-toolbar></view-toolbar>
          <model-view></model-view>
        </div>
      </div>`;
  }
}
